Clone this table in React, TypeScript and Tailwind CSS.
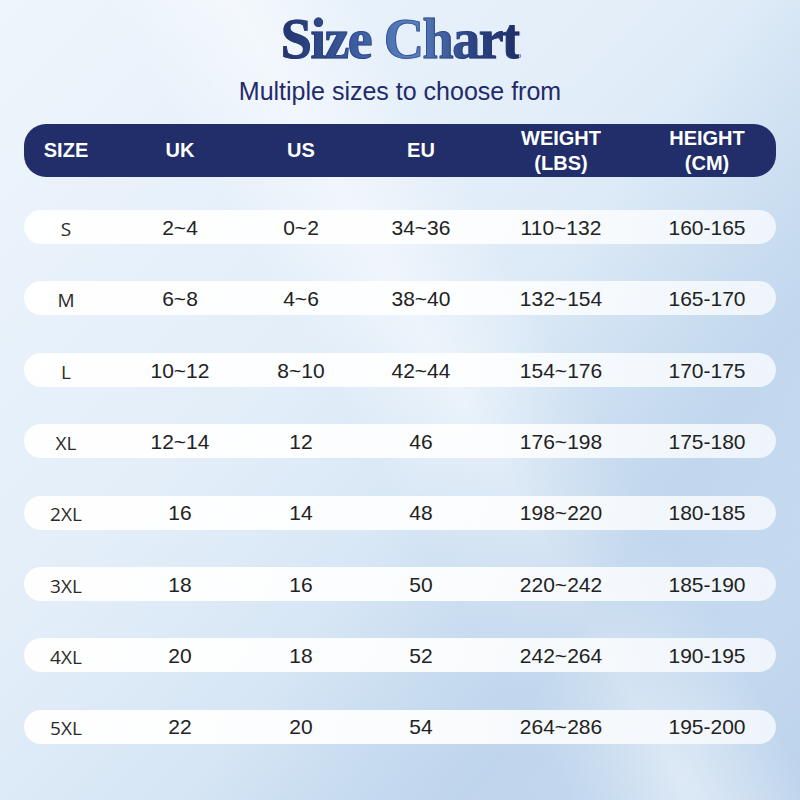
import React from "react";

const rows = [
  ["S", "2~4", "0~2", "34~36", "110~132", "160-165"],
  ["M", "6~8", "4~6", "38~40", "132~154", "165-170"],
  ["L", "10~12", "8~10", "42~44", "154~176", "170-175"],
  ["XL", "12~14", "12", "46", "176~198", "175-180"],
  ["2XL", "16", "14", "48", "198~220", "180-185"],
  ["3XL", "18", "16", "50", "220~242", "185-190"],
  ["4XL", "20", "18", "52", "242~264", "190-195"],
  ["5XL", "22", "20", "54", "264~286", "195-200"],
];

const grid = "grid grid-cols-[84px_144px_98px_142px_138px_146px] items-center";

export default function App() {
  return (
    <div className="relative w-[800px] h-[800px] overflow-hidden font-['Liberation_Sans',Arial,sans-serif] bg-[linear-gradient(135deg,#eef5fc_0%,#e3eef9_40%,#d3e4f4_65%,#bcd3ec_100%)]">
      <div className="pointer-events-none absolute inset-0 bg-[linear-gradient(60deg,transparent_45%,rgba(255,255,255,0.45)_55%,transparent_65%)]" />
      <div className="pointer-events-none absolute inset-0 bg-[linear-gradient(125deg,transparent_55%,rgba(180,205,232,0.5)_75%,transparent_90%)]" />
      <div className="relative flex flex-col items-center">
        <h1 className="mt-[8px] h-[62px] text-[56px] leading-[62px] font-bold tracking-[-1.5px] font-['Liberation_Serif',serif] [-webkit-text-stroke:1px_rgba(34,52,110,0.55)] bg-[linear-gradient(90deg,#22336f_0%,#3f62a6_35%,#5a82c2_55%,#2c4584_80%,#1f2e68_100%)] bg-clip-text text-transparent">
          Size Chart
        </h1>
        <p className="mt-[6px] text-[25px] leading-[30px] text-[#1f2b6b]">
          Multiple sizes to choose from
        </p>
      </div>
      <div className="relative mx-[24px] mt-[18px]">
        <div className={`${grid} h-[53px] rounded-[22px] bg-[#212e69] text-white font-bold text-[20px] leading-[25px] text-center`}>
          <div>SIZE</div>
          <div>UK</div>
          <div>US</div>
          <div>EU</div>
          <div>
            WEIGHT
            <br />
            (LBS)
          </div>
          <div className="pl-2">
            HEIGHT
            <br />
            (CM)
          </div>
        </div>
        <div className="mt-[33px] flex flex-col gap-[37.4px]">
          {rows.map((r) => (
            <div
              key={r[0]}
              className={`${grid} h-[34px] rounded-full bg-[linear-gradient(90deg,rgba(255,255,255,0.97)_0%,rgba(255,255,255,0.9)_60%,rgba(245,249,253,0.85)_100%)] text-[21px] text-[#222] text-center`}
            >
              <div className="pt-[4px] text-[19px] text-[#2a2a2a] font-['Open_Sans','Noto_Sans',sans-serif]">
                {r[0]}
              </div>
              <div className="pt-[1px]">{r[1]}</div>
              <div className="pt-[1px]">{r[2]}</div>
              <div className="pt-[1px]">{r[3]}</div>
              <div className="pt-[1px]">{r[4]}</div>
              <div className="pl-2 pt-[1px]">{r[5]}</div>
            </div>
          ))}
        </div>
      </div>
    </div>
  );
}
